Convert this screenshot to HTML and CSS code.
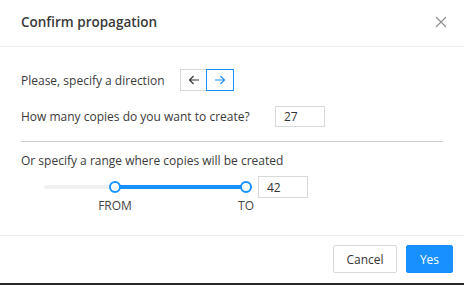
FILE: index.html
```html
<!DOCTYPE html>
<html>
<head>
<meta charset="utf-8">
<link rel="stylesheet" href="styles.css">
</head>
<body>
<div class="modal">
  <div class="header">
    <div class="title">Confirm propagation</div>
    <svg class="close" width="12" height="12" viewBox="0 0 12 12"><path d="M1 1L11 11M11 1L1 11" stroke="#8c8c8c" stroke-width="1.1" fill="none"/></svg>
  </div>
  <div class="body">
    <div class="row dir-row">
      <span class="label">Please, specify a direction</span>
      <div class="btn-group">
        <button class="dir-btn"><svg width="12" height="10" viewBox="0 0 12 10"><path d="M11 5H1.5M5.5 1L1.5 5L5.5 9" stroke="#333" stroke-width="1.1" fill="none"/></svg></button>
        <button class="dir-btn active"><svg width="12" height="10" viewBox="0 0 12 10"><path d="M1 5H10.5M6.5 1L10.5 5L6.5 9" stroke="#1890ff" stroke-width="1.1" fill="none"/></svg></button>
      </div>
    </div>
    <div class="row copies-row">
      <span class="label">How many copies do you want to create?</span>
      <div class="input copies-input">27</div>
    </div>
    <div class="divider"></div>
    <div class="label range-label">Or specify a range where copies will be created</div>
    <div class="slider-row">
      <div class="slider">
        <div class="rail"></div>
        <div class="track"></div>
        <div class="handle h1"></div>
        <div class="handle h2"></div>
        <div class="mark m1">FROM</div>
        <div class="mark m2">TO</div>
      </div>
      <div class="input range-input">42</div>
    </div>
  </div>
  <div class="footer">
    <button class="btn cancel">Cancel</button>
    <button class="btn primary">Yes</button>
  </div>
</div>
</body>
</html>
```
FILE: styles.css
```css
* { box-sizing: border-box; }
html, body { margin: 0; padding: 0; background: #fff; }
body {
  font-family: "Open Sans", "Noto Sans", sans-serif;
  font-size: 12px;
  color: #3a3a3a;
  width: 464px;
  height: 285px;
  overflow: hidden;
}
.modal {
  width: 464px;
  height: 285px;
  display: flex;
  flex-direction: column;
  border-bottom: 2px solid #2b2b2b;
}
.header {
  height: 47px;
  flex: none;
  display: flex;
  align-items: center;
  justify-content: space-between;
  padding: 0 17px 0 21px;
  border-bottom: 1px solid #ececec;
}
.title {
  font-size: 13.5px;
  font-weight: 600;
  color: #3a3a3a;
  margin-top: -2px;
}
.close { margin-top: -2px; }
.body {
  flex: 1;
  padding: 22px 21px 0 21px;
  border-bottom: 1px solid #ececec;
}
.row { display: flex; align-items: center; }
.dir-row { height: 22px; }
.dir-row .label { width: 159px; }
.btn-group { display: flex; height: 22px; }
.dir-btn {
  width: 27px;
  height: 22px;
  padding: 0;
  margin: 0;
  background: #fff;
  border: 1px solid #d9d9d9;
  display: flex;
  align-items: center;
  justify-content: center;
}
.dir-btn.active { border-color: #1890ff; margin-left: -1px; width: 28px; }
.copies-row { margin-top: 15px; height: 21px; }
.copies-row .label { width: 254px; }
.input {
  border: 1px solid #d9d9d9;
  height: 21px;
  width: 50px;
  padding: 0 8px;
  display: flex;
  align-items: center;
  font-size: 12px;
  color: #333;
}
.divider { height: 1px; background: #cfcfcf; margin-top: 14px; width: 422px; }
.range-label { margin-top: 10px; line-height: 18px; }
.slider-row { display: flex; margin-top: 6px; height: 40px; }
.slider { position: relative; width: 214px; height: 40px; margin-left: 23px; }
.rail { position: absolute; left: 0; right: 6px; top: 9px; height: 4px; background: #f0f0f0; border-radius: 2px; }
.track { position: absolute; left: 71px; width: 131px; top: 9px; height: 4px; background: #1890ff; }
.handle {
  position: absolute;
  top: 5px;
  width: 12px;
  height: 12px;
  border: 2px solid #1890ff;
  border-radius: 50%;
  background: #fff;
}
.h1 { left: 65px; }
.h2 { left: 196px; }
.mark { position: absolute; top: 21px; transform: translateX(-50%); font-size: 12px; color: #444; }
.m1 { left: 71px; }
.m2 { left: 202px; }
.range-input { width: 50px; height: 22px; margin-left: 0; }
.footer {
  height: 47px;
  flex: none;
  display: flex;
  justify-content: flex-end;
  align-items: flex-start;
  padding: 9px 11px 0 0;
  gap: 9px;
}
.btn {
  height: 28px;
  font-family: inherit;
  font-size: 12px;
  padding: 0;
  border-radius: 2px;
}
.cancel { width: 64px; background: #fff; border: 1px solid #d9d9d9; color: #333; }
.primary { width: 47px; background: #1890ff; border: 1px solid #1890ff; color: #fff; }
```
